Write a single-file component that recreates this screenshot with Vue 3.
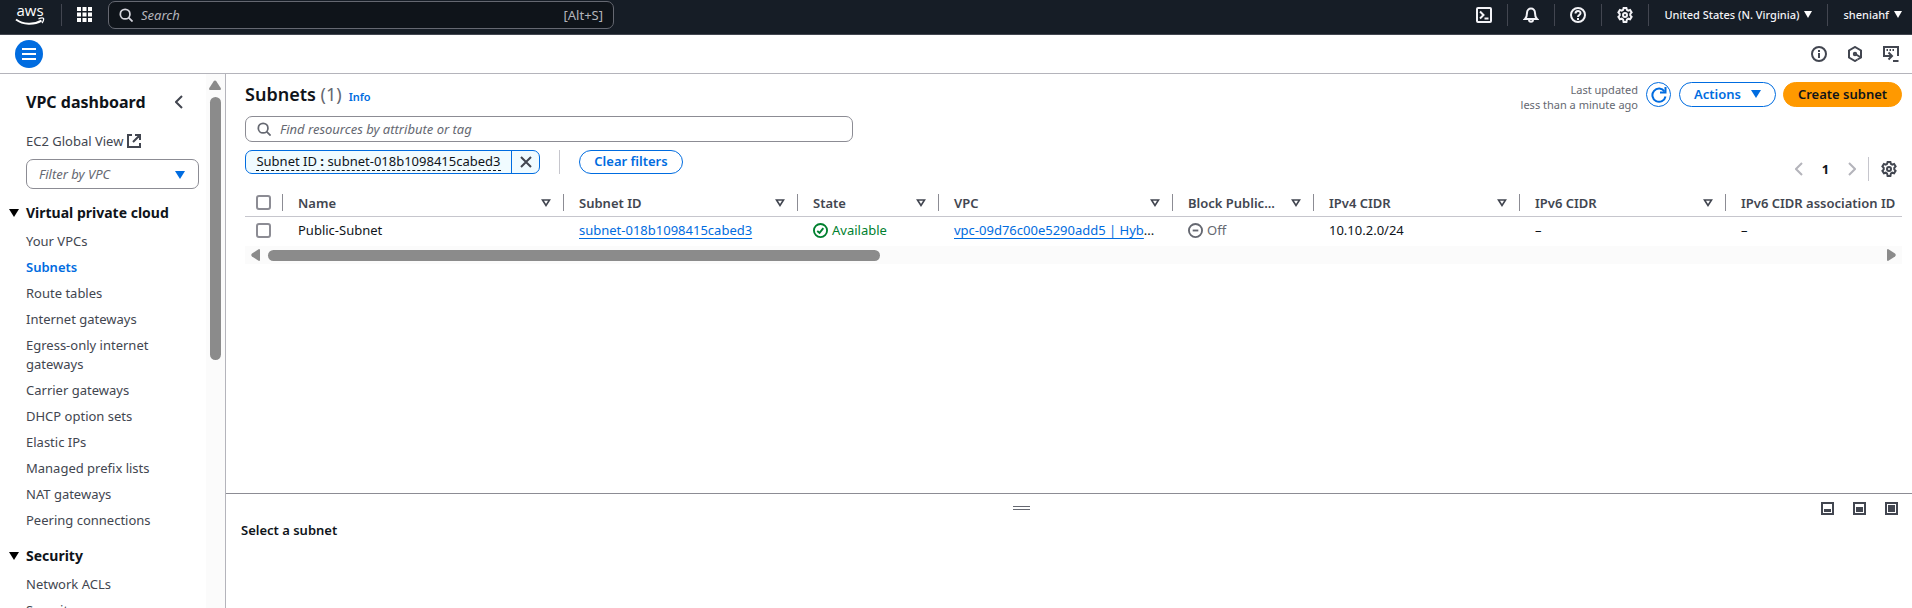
<script setup>
import { ref } from 'vue'

const vpcLinks = [
  'Your VPCs',
  'Subnets',
  'Route tables',
  'Internet gateways',
  'Egress-only internet gateways',
  'Carrier gateways',
  'DHCP option sets',
  'Elastic IPs',
  'Managed prefix lists',
  'NAT gateways',
  'Peering connections',
]
const securityLinks = ['Network ACLs', 'Security groups']
const columns = [
  { label: 'Name', cls: 'w-name' },
  { label: 'Subnet ID', cls: 'w-wide' },
  { label: 'State', cls: 'w-small' },
  { label: 'VPC', cls: 'w-wide' },
  { label: 'Block Public...', cls: 'w-small' },
  { label: 'IPv4 CIDR', cls: 'w-mid' },
  { label: 'IPv6 CIDR', cls: 'w-mid' },
  { label: 'IPv6 CIDR association ID', cls: 'w-rest', last: true },
]
const gear =
  'M6.6 1h2.8l.5 1.9 1.3.7 1.9-.6 1.5 2.3-1.3 1.5v1.6l1.3 1.5-1.5 2.4-1.9-.6-1.3.8L9.4 15H6.6l-.5-2.5-1.3-.8-1.9.6L1.4 9.9l1.3-1.5V6.8L1.4 5.3 2.9 3l1.9.6 1.3-.7z'
const search = ref('')
const filter = ref('')
const vpc = ref('')
</script>

<template>
  <div class="page">
    <header class="topbar">
      <a href="#" class="logo" aria-label="aws home">
        <svg width="30" height="22" viewBox="0 0 30 22">
          <text x="15" y="12" text-anchor="middle" class="logo-text">aws</text>
          <path d="M1 15.500c7 5.300 18 5.600 25.500 1.200" fill="none" stroke="#fff" stroke-width="2" />
          <path d="M23.500 14.800c2-.8 4.500-.9 5-.4.4.6-.1 3-1.500 4.600" fill="none" stroke="#fff" stroke-width="1.300" />
        </svg>
      </a>
      <button class="apps" aria-label="Services">
        <svg width="15" height="15" viewBox="0 0 15 15" fill="#fff">
          <template v-for="r in 3" :key="r">
            <rect v-for="c in 3" :key="c" :x="(c - 1) * 5.5" :y="(r - 1) * 5.5" width="4" height="4" />
          </template>
        </svg>
      </button>
      <label class="gsearch">
        <svg width="14" height="14" viewBox="0 0 16 16" fill="none" stroke="#d5d5dc" stroke-width="2">
          <circle cx="7" cy="7" r="5.5" /><path d="M11 11l4.500 4.500" />
        </svg>
        <input v-model="search" type="text" placeholder="Search" aria-label="Search" />
        <span>[Alt+S]</span>
      </label>
      <nav class="tools" aria-label="Account">
        <button aria-label="CloudShell">
          <svg class="i" viewBox="0 0 16 16"><rect x="1" y="1" width="14" height="14" rx="1" /><path d="M4 4.500L7.500 8 4 11.500M8.500 11.500h4" /></svg>
        </button>
        <button aria-label="Notifications">
          <svg class="i" viewBox="0 0 16 16"><path d="M2 12c1.500-1.500 2-3 2-6 0-3 2-4.500 4-4.500S12 3 12 6c0 3 .5 4.500 2 6zM6 12.500c0 3 4 3 4 0" /></svg>
        </button>
        <button aria-label="Help">
          <svg class="i" viewBox="0 0 16 16"><circle cx="8" cy="8" r="7" /><path d="M5.500 6.500C5.500 3.200 10.500 3.300 10.500 6.200 10.500 8 8 8 8 10" /><path d="M8 11v2" /></svg>
        </button>
        <button aria-label="Settings">
          <svg class="i" viewBox="0 0 16 16"><path :d="gear" /><circle cx="8" cy="8" r="2" /></svg>
        </button>
        <button class="txt region">United States (N. Virginia)<svg width="8" height="7" viewBox="0 0 8 7"><path d="M0 0h8L4 7z" fill="#fff" /></svg></button>
        <button class="txt user">sheniahf<svg width="8" height="7" viewBox="0 0 8 7"><path d="M0 0h8L4 7z" fill="#fff" /></svg></button>
      </nav>
    </header>

    <div class="subbar">
      <button class="menu" aria-label="Toggle navigation">
        <svg width="14" height="12" viewBox="0 0 14 12"><path d="M0 1h14M0 6h14M0 11h14" stroke="#fff" stroke-width="2" /></svg>
      </button>
      <div class="subtools">
        <button aria-label="Info panel">
          <svg class="i" viewBox="0 0 16 16"><circle cx="8" cy="8" r="7" /><path d="M8 7v5M8 4v2" /></svg>
        </button>
        <button aria-label="Amazon Q">
          <svg class="i" viewBox="0 0 16 16"><path d="M14 9.500v-5L8 1 2 4.500v7L8 15l2.500-1.500" /><path d="M14 11.500L9 8.500" /><circle cx="8" cy="8" r="1.2" /><path d="M10.500 13.500L14 11.500v-3" /></svg>
        </button>
        <button aria-label="Console tools">
          <svg class="i" viewBox="0 0 16 16"><path d="M1 8V1h14v9M3.500 4h1.500M6.500 4H8M9.500 4H11M1 7v3h7M5.500 6.500L9 10l-3.500 3.500M10 15h5.500" /></svg>
        </button>
      </div>
    </div>

    <div class="body">
      <aside class="side">
        <div class="side-scroll">
          <div class="side-head">
            <h2>VPC dashboard</h2>
            <button aria-label="Close navigation">
              <svg width="8" height="14" viewBox="0 0 8 14" fill="none" stroke="#424650" stroke-width="2"><path d="M7 1L1 7l6 6" /></svg>
            </button>
          </div>
          <a href="#" class="global">EC2 Global View
            <svg width="14" height="14" viewBox="0 0 14 14" fill="none" stroke="#424650" stroke-width="2"><path d="M5 1H1v12h12V9M8 1h5v5M13 1L6 8" /></svg>
          </a>
          <div class="vpc-filter">
            <select v-model="vpc" aria-label="Filter by VPC"><option value="">Filter by VPC</option></select>
            <svg width="10" height="8" viewBox="0 0 10 8"><path d="M0 0h10L5 8z" fill="#006ce0" /></svg>
          </div>
          <h3><svg width="10" height="8" viewBox="0 0 10 8"><path d="M0 0h10L5 8z" /></svg>Virtual private cloud</h3>
          <ul>
            <li v-for="l in vpcLinks" :key="l"><a href="#" :class="{ on: l === 'Subnets' }">{{ l }}</a></li>
          </ul>
          <h3><svg width="10" height="8" viewBox="0 0 10 8"><path d="M0 0h10L5 8z" /></svg>Security</h3>
          <ul>
            <li v-for="l in securityLinks" :key="l"><a href="#">{{ l }}</a></li>
          </ul>
        </div>
        <div class="vbar">
          <svg width="12" height="10" viewBox="0 0 12 10"><path d="M4.500 1.500q1.500-2 3 0L12 8.500q0 1.500-1 1.500H1q-1 0-1-1.500z" fill="#8b8b8b" /></svg>
          <div class="vthumb"></div>
        </div>
      </aside>

      <main class="main">
        <section class="content">
          <div class="head">
            <h1>Subnets <span>(1)</span></h1>
            <a href="#" class="info">Info</a>
            <p class="updated">Last updated<br />less than a minute ago</p>
            <button class="btn refresh" aria-label="Refresh">
              <svg width="16" height="16" viewBox="0 0 16 16" fill="none" stroke="#006ce0" stroke-width="2"><path d="M14.500 9.500A6.600 6.600 0 1 1 13.500 4.500" /><path d="M14.500 0v5.500H9" /></svg>
            </button>
            <button class="btn actions">Actions<svg width="10" height="8" viewBox="0 0 10 8"><path d="M0 0h10L5 8z" fill="#006ce0" /></svg></button>
            <button class="btn create">Create subnet</button>
          </div>
          <label class="find">
            <svg width="14" height="14" viewBox="0 0 16 16" fill="none" stroke="#656871" stroke-width="2">
              <circle cx="7" cy="7" r="5.5" /><path d="M11 11l4.500 4.500" />
            </svg>
            <input v-model="filter" type="text" placeholder="Find resources by attribute or tag" aria-label="Find resources by attribute or tag" />
          </label>
          <div class="filters">
            <div class="token">
              <button class="token-text"><span>Subnet ID <b>:</b> subnet-018b1098415cabed3</span></button>
              <button class="token-x" aria-label="Remove filter">
                <svg width="12" height="12" viewBox="0 0 12 12"><path d="M1 1l10 10M11 1L1 11" stroke="#424650" stroke-width="2" /></svg>
              </button>
            </div>
            <i class="rule"></i>
            <button class="btn clear">Clear filters</button>
            <div class="pager">
              <button aria-label="Previous page"><svg width="8" height="14" viewBox="0 0 8 14" fill="none" stroke="#b4b4bb" stroke-width="2"><path d="M7 1L1 7l6 6" /></svg></button>
              <b>1</b>
              <button aria-label="Next page"><svg width="8" height="14" viewBox="0 0 8 14" fill="none" stroke="#b4b4bb" stroke-width="2"><path d="M1 1l6 6-6 6" /></svg></button>
              <i class="rule"></i>
              <button aria-label="Preferences"><svg class="i" viewBox="0 0 16 16"><path :d="gear" /><circle cx="8" cy="8" r="2" /></svg></button>
            </div>
          </div>

          <table>
            <colgroup>
              <col class="w-check" />
              <col v-for="c in columns" :key="c.label" :class="c.cls" />
            </colgroup>
            <thead>
              <tr>
                <th class="check"><input type="checkbox" aria-label="Select all" /></th>
                <th v-for="c in columns" :key="c.label">
                  <div>
                    <span>{{ c.label }}</span>
                    <svg v-if="!c.last" width="10" height="8" viewBox="0 0 10 8"><path d="M1.500 1h7L5 6.500z" fill="none" stroke="#424650" stroke-width="1.600" /></svg>
                  </div>
                </th>
              </tr>
            </thead>
            <tbody>
              <tr>
                <td class="check"><input type="checkbox" aria-label="Select Public-Subnet" /></td>
                <td>Public-Subnet</td>
                <td><a href="#">subnet-018b1098415cabed3</a></td>
                <td>
                  <span class="status ok"><svg class="i" viewBox="0 0 16 16"><circle cx="8" cy="8" r="7" /><path d="M4.500 8.500l2.500 2 4-5" /></svg>Available</span>
                </td>
                <td><a href="#">vpc-09d76c00e5290add5 | Hyb</a>...</td>
                <td>
                  <span class="status off"><svg class="i" viewBox="0 0 16 16"><circle cx="8" cy="8" r="7" /><path d="M5 8h6" /></svg>Off</span>
                </td>
                <td>10.10.2.0/24</td>
                <td>–</td>
                <td>–</td>
              </tr>
            </tbody>
          </table>
          <div class="hbar">
            <svg width="9" height="12" viewBox="0 0 9 12"><path d="M8 0q1 0 1 1v10q0 1-1 1L1 7.500q-1.500-1.500 0-3z" fill="#8b8b8b" /></svg>
            <div class="htrack"><div class="hthumb"></div></div>
            <svg width="9" height="12" viewBox="0 0 9 12"><path d="M1 0Q0 0 0 1v10q0 1 1 1l7-4.500q1.500-1.500 0-3z" fill="#8b8b8b" /></svg>
          </div>
        </section>

        <section class="panel">
          <div class="panel-bar">
            <button aria-label="Resize panel" class="grip"><svg width="17" height="5" viewBox="0 0 17 5"><path d="M0 .5h17M0 3.500h17" stroke="#656871" /></svg></button>
            <div class="sizes">
              <button v-for="h in [3, 5, 7]" :key="h" :aria-label="'Panel size ' + h">
                <svg width="13" height="13" viewBox="0 0 13 13"><rect x="1" y="1" width="11" height="11" fill="none" stroke="#424650" stroke-width="2" /><rect x="3" :y="10 - h" width="7" :height="h" fill="#424650" /></svg>
              </button>
            </div>
          </div>
          <h2>Select a subnet</h2>
        </section>
      </main>
    </div>
  </div>
</template>

<style>
body { background: #fff; }
</style>

<style scoped>
.page { height: 100vh; display: flex; flex-direction: column; overflow: hidden; font-family: "Noto Sans", "Open Sans", sans-serif; font-size: 13px; line-height: 18px; color: #0f141a; }
.page * { box-sizing: border-box; }
button, input, select { font: inherit; color: inherit; background: none; border: 0; padding: 0; margin: 0; }
button { display: flex; align-items: center; justify-content: center; white-space: nowrap; }
h1, h2, h3, p, ul { margin: 0; padding: 0; }
svg { display: block; flex: none; }
.i { width: 16px; height: 16px; fill: none; stroke: currentColor; stroke-width: 2; }

.topbar { flex: none; height: 35px; background: #161d26; border-bottom: 1px solid #424650; display: flex; align-items: flex-start; color: #f3f3f7; }
.logo { width: 62px; height: 22px; margin-top: 4px; padding-left: 15px; border-right: 1px solid #424650; }
.logo svg { overflow: visible; }
.logo-text { font: 500 15px "Open Sans", sans-serif; fill: #fff; }
.apps { width: 46px; height: 28px; padding-right: 2px; }
.gsearch { width: 506px; height: 28px; margin-top: 1px; padding: 0 10px 1px; border: 1px solid #656871; border-radius: 7px; background: #0f141a; display: flex; align-items: center; gap: 8px; color: #b4b4bb; }
.gsearch input { flex: 1; min-width: 0; outline: 0; font-size: 13px; }
.gsearch input::placeholder { color: #b4b4bb; font-style: italic; opacity: 1; }
.tools { margin-left: auto; display: flex; margin-top: 4px; font-size: 11px; }
.tools button { width: 47px; height: 22px; border-right: 1px solid #424650; }
.tools .txt { width: auto; font-weight: 500; gap: 5px; padding: 0 15px 1px; }
.tools .txt.user { border: 0; padding-right: 10px; }

.subbar { flex: none; height: 39px; border-bottom: 1px solid #b4b4bb; display: flex; align-items: center; justify-content: space-between; padding: 0 13px 0 15px; }
.menu { width: 28px; height: 28px; border-radius: 50%; background: #006ce0; }
.subtools { display: flex; gap: 20px; color: #424650; }

.body { flex: 1; min-height: 0; display: flex; }
.side { flex: none; width: 226px; border-right: 1px solid #b4b4bb; display: flex; overflow: hidden; }
.side-scroll { flex: 1; overflow: hidden; color: #424650; }
.side-head { display: flex; justify-content: space-between; align-items: center; padding: 16px 23px 0 26px; height: 40px; }
.side-head h2 { font-size: 16px; line-height: 24px; color: #0f141a; }
.global { display: flex; align-items: center; gap: 4px; padding-left: 26px; margin-top: 18px; color: #424650; text-decoration: none; }
.vpc-filter { position: relative; margin: 9px 7px 14px 26px; }
.vpc-filter select { appearance: none; width: 100%; height: 30px; border: 1px solid #8c8c94; border-radius: 7px; padding: 0 12px; font-style: italic; color: #656871; background: #fff; }
.vpc-filter svg { position: absolute; right: 14px; top: 12px; pointer-events: none; }
.side h3 { display: flex; align-items: center; gap: 7px; padding-left: 9px; font-size: 14px; line-height: 20px; color: #0f141a; }
.side ul { list-style: none; padding: 9px 40px 0 26px; }
.side ul + h3 { margin-top: 16px; }
.side li { margin-bottom: 7px; line-height: 19px; }
.side li a { color: #424650; text-decoration: none; display: block; }
.side li .on { color: #006ce0; font-weight: 600; }
.vbar { flex: none; width: 19px; background: #fbfbfb; padding: 6px 4px 0 3px; display: flex; flex-direction: column; align-items: center; gap: 7px; }
.vthumb { width: 11px; height: 263px; border-radius: 6px; background: #8b8b8b; }

.main { flex: 1; min-width: 0; display: flex; flex-direction: column; }
.content { flex: 1; min-height: 0; padding: 8px 10px 0 19px; }
.head { display: flex; align-items: flex-start; }
.head h1 { font-size: 18px; line-height: 24px; font-weight: 600; }
.head h1 span { font-weight: 400; color: #656871; }
.info { margin: 6px 0 0 7px; font-size: 11px; line-height: 18px; font-weight: 600; color: #006ce0; text-decoration: none; }
.updated { margin-left: auto; font-size: 11px; line-height: 15px; color: #656871; text-align: right; }
.btn { height: 25px; border: 1px solid #006ce0; border-radius: 13px; color: #006ce0; font-weight: 600; padding-bottom: 2px; }
.refresh { width: 25px; margin-left: 8px; padding: 0; }
.actions { width: 97px; margin-left: 8px; gap: 10px; }
.create { width: 119px; margin-left: 7px; background: #ff9900; border-color: #ff9900; color: #0f141a; }
.find { width: 608px; max-width: 100%; height: 26px; margin-top: 4px; border: 1px solid #8c8c94; border-radius: 7px; display: flex; align-items: center; gap: 9px; padding: 0 11px 1px; }
.find input { flex: 1; min-width: 0; outline: 0; }
.find input::placeholder { color: #656871; font-style: italic; opacity: 1; }
.filters { display: flex; align-items: flex-start; margin-top: 8px; }
.token { display: flex; height: 24px; border: 1px solid #006ce0; border-radius: 7px; background: #f0fbff; overflow: hidden; }
.token-text { width: 265px; padding-bottom: 1px; }
.token-text span { line-height: 17px; border-bottom: 1px dashed #0f141a; }
.token-x { width: 28px; border-left: 1px solid #006ce0; }
.filters .rule { width: 1px; height: 24px; margin: 0 19px; background: #c6c6cd; }
.clear { width: 104px; height: 24px; }
.pager { margin: 7px 5px 0 auto; display: flex; align-items: center; color: #424650; }
.pager b { width: 45px; text-align: center; color: #0f141a; }
.pager .rule { margin: 0 12px; }

table { width: 100%; table-layout: fixed; border-collapse: separate; border-spacing: 0; margin-top: 10px; }
.w-check { width: 37px; }
.w-name { width: 281px; }
.w-wide { width: 234px; }
.w-small { width: 141px; }
.w-mid { width: 206px; }
th { height: 26px; padding: 0 0 2px; text-align: left; font-weight: 600; border-bottom: 1px solid #c6c6cd; color: #424650; }
th div { display: flex; align-items: center; justify-content: space-between; height: 17px; padding: 0 12px 0 15px; border-left: 1px solid #8c8c94; white-space: nowrap; }
th:last-child div { padding-right: 0; }
td { height: 29px; padding: 0 0 3px 16px; white-space: nowrap; overflow: hidden; }
th.check, td.check { padding-left: 11px; }
.check input { appearance: none; display: block; width: 15px; height: 15px; border: 2px solid #8c8c94; border-radius: 3px; background: #fff; }
td a { color: #006ce0; text-underline-offset: 3px; }
.status { display: flex; align-items: center; gap: 4px; }
.status .i { width: 15px; height: 15px; }
.ok { color: #00802f; }
.off { color: #656871; }
.hbar { height: 18px; background: #fbfbfb; display: flex; align-items: center; padding: 0 6px; gap: 8px; }
.htrack { flex: 1; }
.hthumb { width: 38%; height: 11px; border-radius: 6px; background: #8b8b8b; }

.panel { flex: none; height: 115px; border-top: 1px solid #8c8c94; }
.panel-bar { display: flex; gap: 4px; padding: 8px 14px 0 0; color: #424650; }
.grip { flex: 1; height: 13px; }
.sizes { display: flex; gap: 19px; justify-content: flex-end; }
.panel h2 { font-size: 13px; line-height: 18px; font-weight: 600; margin: 6px 0 0 15px; }
</style>
